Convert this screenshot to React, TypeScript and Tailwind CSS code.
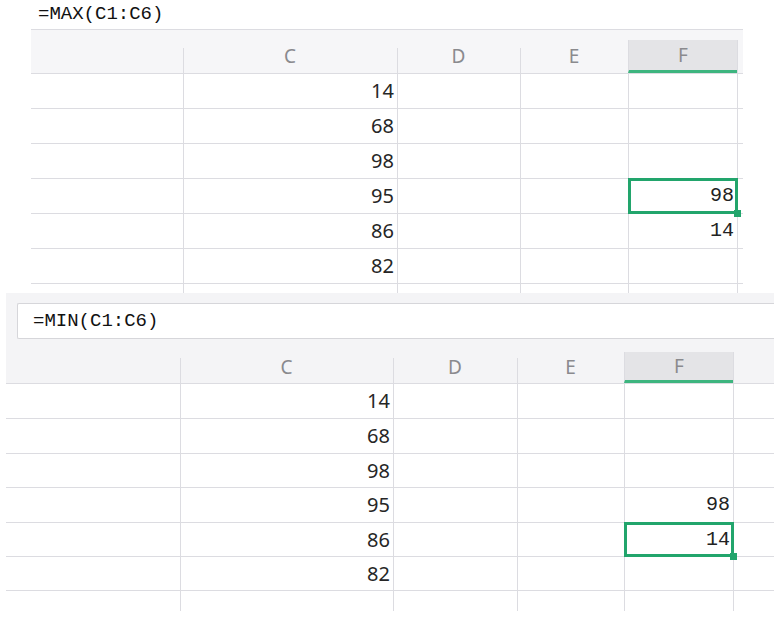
import React from "react";

const values = ["14", "68", "98", "95", "86", "82"];

const line = "border-[#dcdce1]";
const sans = "font-['Noto_Sans','Open_Sans',sans-serif]";
const mono = "font-['Liberation_Mono','Courier_New',monospace]";

type Cols = { left: string; c: string; d: string; e: string; f: string };

type SheetProps = {
  cols: Cols;
  rowHeights: string[];
  tail: string;
  fValues: Record<number, string>;
  selected: number;
};

function HeaderCells({ cols, fHeight }: { cols: Cols; fHeight: string }) {
  const cell = `flex items-center justify-center text-[19px] text-[#8a8a8e] ${sans}`;
  // separators only run over the lower part of the header
  const sep = `h-[25px] border-l ${line} self-end shrink-0`;
  return (
    <>
      <div className={`${cols.left} shrink-0`} />
      <div className={sep} />
      <div className={`${cols.c} ${fHeight} shrink-0 ${cell} -ml-px`}>C</div>
      <div className={sep} />
      <div className={`${cols.d} ${fHeight} shrink-0 ${cell} -ml-px`}>D</div>
      <div className={sep} />
      <div className={`${cols.e} ${fHeight} shrink-0 ${cell} -ml-px`}>E</div>
      <div
        className={`${cols.f} ${fHeight} shrink-0 ${cell} border-l ${line} bg-[#e4e4e7] border-b-[3px] border-b-[#3db57f] text-[#4dbb8a]`}
      >
        F
      </div>
      <div className={`flex-1 ${fHeight} border-l ${line}`} />
    </>
  );
}

function Rows({ cols, rowHeights, tail, fValues, selected }: SheetProps) {
  return (
    <div className="bg-white">
      {rowHeights.map((h, i) => (
        <div key={i} className={`flex ${h} border-b ${line}`}>
          <div className={`${cols.left} shrink-0`} />
          <div
            className={`${cols.c} shrink-0 border-l ${line} flex items-center justify-end pr-[3px] text-[20px] text-[#262626] ${sans}`}
          >
            {values[i]}
          </div>
          <div className={`${cols.d} shrink-0 border-l ${line}`} />
          <div className={`${cols.e} shrink-0 border-l ${line}`} />
          <div
            className={`${cols.f} shrink-0 border-l ${line} relative flex items-center justify-end pr-[3px] text-[20px] text-[#222] ${mono}`}
          >
            {fValues[i]}
            {selected === i && (
              <div className="absolute -left-px -top-px -right-px -bottom-px border-[3px] border-[#22a56c]">
                <div className="absolute -right-[6px] -bottom-[6px] w-[7px] h-[7px] bg-[#22a56c]" />
              </div>
            )}
          </div>
          <div className={`flex-1 border-l ${line}`} />
        </div>
      ))}
      <div className={`flex ${tail}`}>
        <div className={`${cols.left} shrink-0`} />
        <div className={`${cols.c} shrink-0 border-l ${line}`} />
        <div className={`${cols.d} shrink-0 border-l ${line}`} />
        <div className={`${cols.e} shrink-0 border-l ${line}`} />
        <div className={`${cols.f} shrink-0 border-l ${line}`} />
        <div className={`flex-1 border-l ${line}`} />
      </div>
    </div>
  );
}

export default function App() {
  const topCols: Cols = {
    left: "w-[152px]",
    c: "w-[214px]",
    d: "w-[123px]",
    e: "w-[108px]",
    f: "w-[109px]",
  };
  const bottomCols: Cols = {
    left: "w-[174px]",
    c: "w-[213px]",
    d: "w-[124px]",
    e: "w-[107px]",
    f: "w-[109px]",
  };

  return (
    <div className="w-[774px] h-[634px] bg-white overflow-hidden">
      {/* MAX sheet */}
      <div className="h-[293px]">
        <div className={`h-[29px] pl-[38px] flex items-center text-[19px] text-[#111] ${mono}`}>
          =MAX(C1:C6)
        </div>
        <div className="ml-[31px] w-[712px]">
          <div className={`h-[45px] flex items-end border-y ${line} bg-[#f6f6f8]`}>
            <HeaderCells cols={topCols} fHeight="h-[33px]" />
          </div>
          <Rows
            cols={topCols}
            rowHeights={Array(6).fill("h-[35px]")}
            tail="h-[9px]"
            fValues={{ 3: "98", 4: "14" }}
            selected={3}
          />
        </div>
      </div>

      {/* MIN sheet */}
      <div className="pl-[6px]">
        <div className="bg-[#f4f4f6] pt-[10px]">
          <div
            className={`ml-[11px] h-[36px] bg-white border border-r-0 border-[#d6d6da] rounded-l-[2px] flex items-center pl-[15px] text-[19px] text-[#111] ${mono}`}
          >
            =MIN(C1:C6)
          </div>
          <div className={`h-[45px] flex items-end border-b ${line}`}>
            <HeaderCells cols={bottomCols} fHeight="h-[31px]" />
          </div>
        </div>
        <Rows
          cols={bottomCols}
          rowHeights={["h-[35px]", "h-[35px]", "h-[34px]", "h-[35px]", "h-[34px]", "h-[34px]"]}
          tail="h-[20px]"
          fValues={{ 3: "98", 4: "14" }}
          selected={4}
        />
      </div>
    </div>
  );
}
